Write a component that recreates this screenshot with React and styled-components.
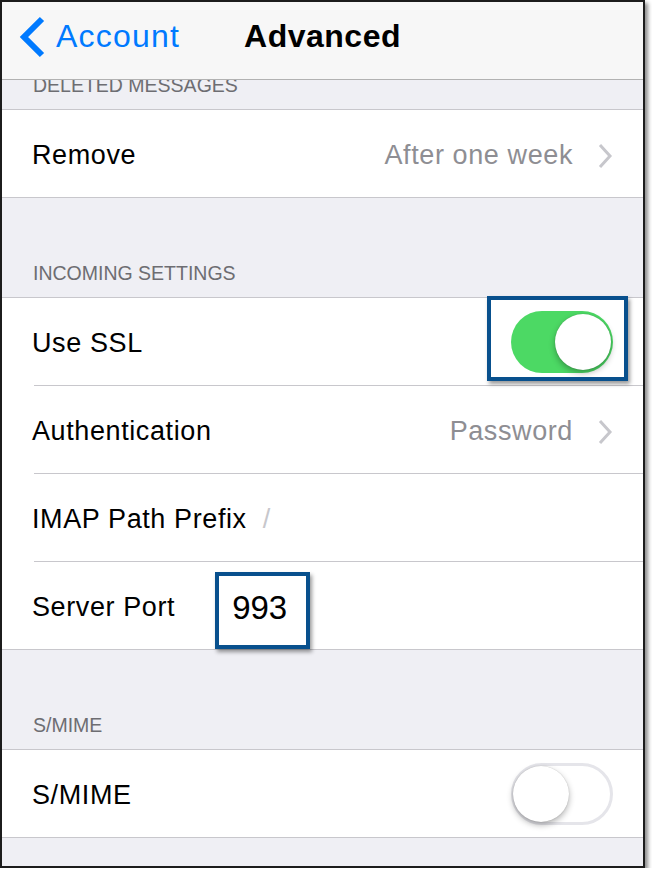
import React from "react";
import styled, { createGlobalStyle } from "styled-components";

const font = `"Liberation Sans", Arial, Helvetica, sans-serif`;

const Global = createGlobalStyle`
  body {
    margin: 0;
    background: #fff;
    font-family: ${font};
  }
`;

const Chevron = () => (
  <svg width="16" height="26" viewBox="0 0 16 26">
    <path d="M3 2 L13 13 L3 24" fill="none" stroke="#c7c7cc" strokeWidth="3" />
  </svg>
);

const BackArrow = () => (
  <svg width="28" height="42" viewBox="0 0 28 42">
    <path d="M24 3 L6 21 L24 39" fill="none" stroke="#007aff" strokeWidth="6" />
  </svg>
);

const App = () => {
  return (
    <>
      <Global />
      <S.frame>
        <S.nav>
          <S.back>
            <BackArrow />
            <S.backText>Account</S.backText>
          </S.back>
          <S.title>Advanced</S.title>
          <div />
        </S.nav>
        <S.scroll>
          <S.header height={29}>Deleted Messages</S.header>
          <S.group>
            <S.row>
              <S.cell>
                <S.label>Remove</S.label>
                <S.value>After one week</S.value>
                <Chevron />
              </S.cell>
            </S.row>
          </S.group>

          <S.header height={99}>Incoming Settings</S.header>
          <S.group>
            <S.row>
              <S.cell>
                <S.label>Use SSL</S.label>
                <S.highlight top={19} right={15} bottom={8} left={24} push>
                  <S.toggle on>
                    <S.knob on />
                  </S.toggle>
                </S.highlight>
              </S.cell>
            </S.row>
            <S.row>
              <S.cell>
                <S.label>Authentication</S.label>
                <S.value>Password</S.value>
                <Chevron />
              </S.cell>
            </S.row>
            <S.row>
              <S.cell>
                <S.label>IMAP Path Prefix</S.label>
                <S.field offset={16} muted>
                  /
                </S.field>
              </S.cell>
            </S.row>
            <S.row>
              <S.cell>
                <S.label>Server Port</S.label>
                <S.field offset={57}>
                  <S.highlight top={16} right={23} bottom={21} left={17}>
                    <S.port>993</S.port>
                  </S.highlight>
                </S.field>
              </S.cell>
            </S.row>
          </S.group>

          <S.header height={99}>S/MIME</S.header>
          <S.group>
            <S.row>
              <S.cell>
                <S.label>S/MIME</S.label>
                <S.toggle>
                  <S.knob />
                </S.toggle>
              </S.cell>
            </S.row>
          </S.group>
        </S.scroll>
      </S.frame>
    </>
  );
};

const S = {
  frame: styled.div`
    box-sizing: border-box;
    width: 645px;
    height: 868px;
    border: 2px solid #1c1c1c;
    box-shadow: 3px 3px 4px rgba(0, 0, 0, 0.45);
    display: flex;
    flex-direction: column;
    overflow: hidden;
    background: #efeff4;
  `,
  nav: styled.div`
    height: 78px;
    flex-shrink: 0;
    display: grid;
    grid-template-columns: 1fr auto 1fr;
    align-items: center;
    padding-bottom: 8px;
    box-sizing: border-box;
    background: #f7f7f7;
    border-bottom: 1px solid #b2b2b2;
  `,
  back: styled.div`
    display: flex;
    align-items: center;
    padding-left: 16px;
    gap: 10px;
  `,
  backText: styled.span`
    color: #007aff;
    font-size: 32px;
    letter-spacing: 1.2px;
  `,
  title: styled.div`
    color: #000;
    font-size: 32px;
    font-weight: 700;
    letter-spacing: 0.5px;
  `,
  scroll: styled.div`
    flex: 1;
    overflow: hidden;
  `,
  header: styled.div`
    height: ${(p) => p.height}px;
    display: flex;
    align-items: flex-end;
    overflow: hidden;
    padding: 0 31px 12px;
    box-sizing: border-box;
    color: #6d6d72;
    font-size: 19.5px;
    line-height: 24px;
    text-transform: uppercase;
    white-space: nowrap;
  `,
  group: styled.div`
    background: #fff;
    border-top: 1px solid #c8c7cc;
    border-bottom: 1px solid #c8c7cc;
  `,
  row: styled.div`
    padding-left: 32px;
    & + & > div {
      border-top: 1px solid #c8c7cc;
    }
  `,
  cell: styled.div`
    height: 83px;
    display: flex;
    align-items: center;
    padding: 4px 30px 0 0;
  `,
  label: styled.span`
    flex: none;
    margin-left: -2px;
    color: #000;
    font-size: 27px;
    letter-spacing: 0.6px;
  `,
  value: styled.span`
    margin-left: auto;
    margin-right: 24px;
    color: #8e8e93;
    font-size: 27px;
    letter-spacing: 0.6px;
  `,
  field: styled.span`
    margin-left: ${(p) => p.offset}px;
    color: ${(p) => (p.muted ? "#c7c7cc" : "#000")};
    font-size: 27px;
  `,
  port: styled.span`
    display: block;
    font-size: 33px;
    line-height: 40px;
    color: #000;
  `,
  highlight: styled.div`
    position: relative;
    margin-left: ${(p) => (p.push ? "auto" : "0")};
    &::after {
      content: "";
      position: absolute;
      top: -${(p) => p.top}px;
      right: -${(p) => p.right}px;
      bottom: -${(p) => p.bottom}px;
      left: -${(p) => p.left}px;
      border: 4px solid #08508d;
      box-shadow: 2px 3px 4px rgba(0, 0, 0, 0.4);
    }
  `,
  toggle: styled.div`
    box-sizing: border-box;
    width: 102px;
    height: 62px;
    margin-left: auto;
    margin-top: -4px;
    border-radius: 31px;
    display: flex;
    align-items: center;
    justify-content: ${(p) => (p.on ? "flex-end" : "flex-start")};
    padding: 0 2px;
    background: ${(p) => (p.on ? "#4cd964" : "#fff")};
    border: ${(p) => (p.on ? "none" : "3px solid #e5e5ea")};
  `,
  knob: styled.div`
    width: 56px;
    height: 56px;
    border-radius: 50%;
    background: #fff;
    margin: ${(p) => (p.on ? "0" : "0 0 0 -3px")};
    box-shadow: 0 3px 6px rgba(0, 0, 0, 0.3), 0 0 1px rgba(0, 0, 0, 0.25);
  `,
};

export default App;
